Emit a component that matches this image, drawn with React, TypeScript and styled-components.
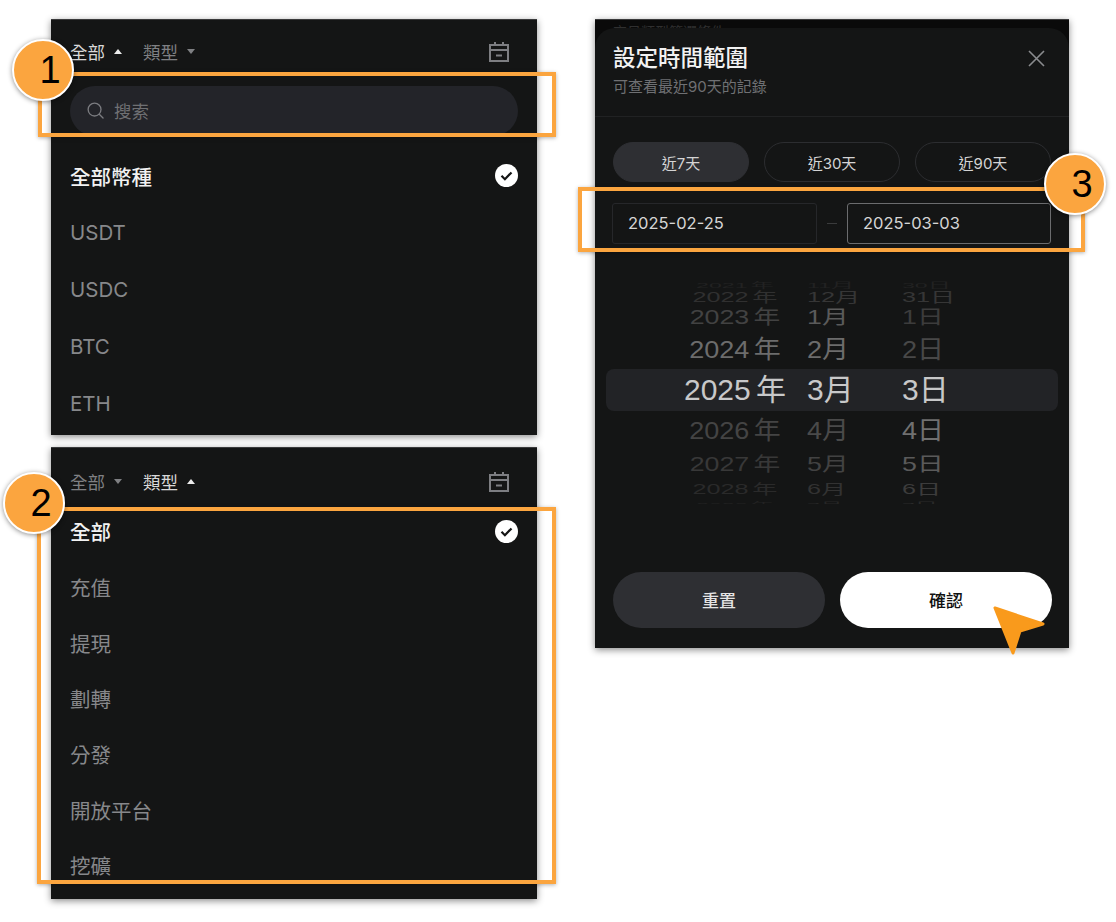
import React from 'react';
import styled, { createGlobalStyle } from 'styled-components';

const GlobalStyle = createGlobalStyle`
  html, body {
    margin: 0;
    padding: 0;
    background: #ffffff;
  }
  * {
    box-sizing: border-box;
  }
`;

const FONT = `Inter, "Noto Sans CJK TC", sans-serif`;
const ORANGE = '#fba53f';

const Page = styled.div`
  position: relative;
  width: 1116px;
  height: 922px;
  overflow: hidden;
  padding: 19px 0 0 51px;
  display: flex;
  align-items: flex-start;
  gap: 58px;
  font-family: ${FONT};
  color: #e8e8e8;
`;

const LeftColumn = styled.div`
  width: 486px;
  display: flex;
  flex-direction: column;
  gap: 12px;
`;

const Panel = styled.section<{ $height: number }>`
  height: ${(p) => p.$height}px;
  background: #141515;
  overflow: hidden;
  box-shadow: 0 2px 7px rgba(0, 0, 0, 0.45);
  border-top: 1px solid #3a3b3c;
`;

const FilterBar = styled.div<{ $height: number; $top: number }>`
  height: ${(p) => p.$height}px;
  padding: ${(p) => p.$top}px 27px 0 19px;
  display: flex;
  align-items: flex-start;
`;

const FilterTab = styled.div<{ $open?: boolean }>`
  height: 40px;
  padding-bottom: 2px;
  display: flex;
  align-items: center;
  gap: 9px;
  margin-right: 21px;
  font-size: 17.5px;
  color: ${(p) => (p.$open ? '#d8d8d8' : '#7f8083')};
`;

const Caret = styled.span<{ $open?: boolean }>`
  width: 0;
  height: 0;
  border-left: 4.5px solid transparent;
  border-right: 4.5px solid transparent;
  ${(p) =>
    p.$open
      ? 'border-bottom: 5px solid #ececec;'
      : 'border-top: 5px solid #7f8083;'}
`;

const CalendarButton = styled.div`
  margin-left: auto;
  height: 40px;
  display: flex;
  align-items: center;
`;

const SearchWrap = styled.div`
  padding: 2px 19px 11px 19px;
`;

const SearchBox = styled.div`
  height: 50px;
  padding: 0 0 2px 17px;
  border-radius: 25px;
  background: #232429;
  display: flex;
  align-items: center;
  gap: 10px;
  font-size: 17.5px;
  color: #6f7073;
`;

const OptionRow = styled.div<{ $height: number; $active?: boolean }>`
  height: ${(p) => p.$height}px;
  padding: 0 19px;
  display: flex;
  align-items: center;
  justify-content: space-between;
  font-size: 20.5px;
  font-weight: ${(p) => (p.$active ? 500 : 400)};
  color: ${(p) => (p.$active ? '#f2f2f2' : '#87888b')};
`;

const DateSheetFrame = styled.section`
  width: 474px;
  height: 629px;
  background: #0a0a0a;
  overflow: hidden;
  border-top: 1px solid #3a3b3c;
  box-shadow: 0 2px 7px rgba(0, 0, 0, 0.45);
`;

const BehindText = styled.div`
  height: 8px;
  padding: 5px 0 0 18px;
  overflow: hidden;
  font-size: 14px;
  line-height: 14px;
  color: #303030;
`;

const Sheet = styled.div`
  height: 620px;
  background: #141515;
  border-radius: 20px 20px 0 0;
`;

const SheetHeader = styled.header`
  height: 89px;
  padding: 17px 24px 0 18px;
  border-bottom: 1px solid #212223;
  display: flex;
  justify-content: space-between;
  align-items: flex-start;
`;

const SheetTitle = styled.h2`
  margin: 0;
  font-size: 22.5px;
  line-height: 26px;
  font-weight: 500;
  color: #f2f2f2;
`;

const SheetSubtitle = styled.p`
  margin: 6px 0 0;
  font-size: 15px;
  line-height: 20px;
  color: #6f7073;
`;

const CloseButton = styled.div`
  margin: 5px 0 0;
  height: 20px;
  display: flex;
`;

const PresetRow = styled.div`
  margin-top: 25px;
  padding: 0 18px;
  display: grid;
  grid-template-columns: repeat(3, 136px);
  gap: 15px;
`;

const PresetButton = styled.div<{ $active?: boolean }>`
  height: 40px;
  border-radius: 20px;
  border: 1px solid ${(p) => (p.$active ? '#2e2f33' : '#2c2d30')};
  background: ${(p) => (p.$active ? '#2e2f33' : 'transparent')};
  display: flex;
  align-items: center;
  justify-content: center;
  font-size: 15px;
  color: #d4d4d4;
`;

const DateRow = styled.div`
  margin-top: 21px;
  padding: 0 18px 0 17px;
  display: flex;
  align-items: center;
  justify-content: space-between;
`;

const DateField = styled.div<{ $focused?: boolean }>`
  width: ${(p) => (p.$focused ? 204 : 205)}px;
  height: 41px;
  padding: 0 0 2px 15px;
  border: ${(p) => (p.$focused ? '1.5px solid #6b6c6e' : '1px solid #26272a')};
  border-radius: 3px;
  display: flex;
  align-items: center;
  font-size: 16.5px;
  color: #d6d6d6;
`;

const DateDash = styled.span`
  width: 10px;
  height: 1px;
  background: #3a3b3c;
`;

const Wheel = styled.div`
  margin: 35px 11px 0;
  height: 225px;
  overflow: hidden;
  font-family: "Liberation Sans", "Noto Sans CJK TC", sans-serif;
`;

const WheelInner = styled.div`
  margin-top: -4px;
`;

const WheelRow = styled.div<{ $height: number; $selected?: boolean }>`
  height: ${(p) => p.$height}px;
  padding-left: 75px;
  display: grid;
  grid-template-columns: 108px 77px 1fr;
  column-gap: 18px;
  align-items: center;
  border-radius: ${(p) => (p.$selected ? '8px' : '0')};
  background: ${(p) => (p.$selected ? '#222326' : 'transparent')};
`;

const WheelCell = styled.span<{
  $size: number;
  $squash: number;
  $stretch: number;
  $tone: string;
  $center?: boolean;
}>`
  display: block;
  white-space: nowrap;
  word-spacing: -3px;
  line-height: 1;
  font-size: ${(p) => p.$size}px;
  color: ${(p) => p.$tone};
  text-align: ${(p) => (p.$center ? 'center' : 'left')};
  transform-origin: ${(p) => (p.$center ? 'center' : 'left center')};
  transform: scale(${(p) => p.$stretch}, ${(p) => p.$squash});
`;

const SheetFooter = styled.div`
  margin-top: 68px;
  padding: 0 18px;
  display: grid;
  grid-template-columns: 212px 212px;
  gap: 15px;
`;

const FooterButton = styled.div<{ $primary?: boolean }>`
  height: 56px;
  padding-bottom: 2px;
  border-radius: 28px;
  background: ${(p) => (p.$primary ? '#ffffff' : '#2e2f33')};
  color: ${(p) => (p.$primary ? '#111111' : '#e4e4e4')};
  display: flex;
  align-items: center;
  justify-content: center;
  font-size: 17px;
  font-weight: 500;
`;

const HighlightBox = styled.div<{ $x: number; $y: number; $w: number; $h: number }>`
  position: absolute;
  left: ${(p) => p.$x}px;
  top: ${(p) => p.$y}px;
  width: ${(p) => p.$w}px;
  height: ${(p) => p.$h}px;
  border: 4px solid ${ORANGE};
  box-shadow: 0 1px 4px rgba(0, 0, 0, 0.3);
`;

const Callout = styled.div<{ $x: number; $y: number }>`
  position: absolute;
  left: ${(p) => p.$x}px;
  top: ${(p) => p.$y}px;
  width: 62px;
  height: 62px;
  border-radius: 50%;
  background: ${ORANGE};
  border: 2px solid #ffffff;
  box-shadow: 0 1px 5px rgba(0, 0, 0, 0.45);
  display: flex;
  align-items: center;
  justify-content: center;
  padding-left: 14px;
  font-family: "Liberation Sans", sans-serif;
  font-size: 38px;
  color: #000000;
`;

const Pointer = styled.svg`
  position: absolute;
  left: 990px;
  top: 602px;
`;

const CalendarIcon = () => (
  <svg width="22" height="22" viewBox="0 0 22 22" fill="none" stroke="#7d7e82" strokeWidth="2">
    <rect x="2" y="4" width="18" height="16" />
    <path d="M2 9h18M7 1v4M15 1v4M8 14.5h6" />
  </svg>
);

const SearchIcon = () => (
  <svg width="17" height="17" viewBox="0 0 18 18" fill="none" stroke="#7b7c80" strokeWidth="1.4">
    <circle cx="8" cy="8" r="6.8" />
    <path d="M13 13l4 4" strokeLinecap="round" />
  </svg>
);

const CheckBadge = () => (
  <svg width="23" height="23" viewBox="0 0 23 23">
    <circle cx="11.5" cy="11.5" r="11.5" fill="#ffffff" />
    <path d="M6.5 11.8l3.4 3.4 6.6-6.8" fill="none" stroke="#141515" strokeWidth="2.2" />
  </svg>
);

const CloseIcon = () => (
  <svg width="17" height="17" viewBox="0 0 17 17" stroke="#8a8b8e" strokeWidth="1.6">
    <path d="M1 1l15 15M16 1L1 16" />
  </svg>
);

const COIN_OPTIONS = ['USDT', 'USDC', 'BTC', 'ETH'];
const TYPE_OPTIONS = ['充值', '提現', '劃轉', '分發', '開放平台', '挖礦'];
const PRESETS = ['近7天', '近30天', '近90天'];

const WHEEL_ROWS = [
  { h: 10, size: 22, squash: 0.35, stretch: 1.05, cells: [['2021 年', '#222222'], ['11月', '#222222'], ['30日', '#222222']] },
  { h: 18, size: 24, squash: 0.58, stretch: 1.05, cells: [['2022 年', '#303030'], ['12月', '#363636'], ['31日', '#363636']] },
  { h: 28, size: 26, squash: 0.76, stretch: 1.03, cells: [['2023 年', '#424242'], ['1月', '#5a5a5a'], ['1日', '#3c3c3c']] },
  { h: 38, size: 27, squash: 0.92, stretch: 1, cells: [['2024 年', '#6c6c6c'], ['2月', '#6c6c6c'], ['2日', '#484848']] },
  { h: 42, size: 30, squash: 1, stretch: 1, selected: true, cells: [['2025 年', '#c8c8c9'], ['3月', '#c8c8c9'], ['3日', '#c8c8c9']] },
  { h: 40, size: 27, squash: 0.92, stretch: 1, cells: [['2026 年', '#444444'], ['4月', '#4a4a4a'], ['4日', '#707070']] },
  { h: 26, size: 26, squash: 0.76, stretch: 1.03, cells: [['2027 年', '#383838'], ['5月', '#424242'], ['5日', '#5a5a5a']] },
  { h: 18, size: 24, squash: 0.58, stretch: 1.05, cells: [['2028 年', '#2a2a2a'], ['6月', '#323232'], ['6日', '#3c3c3c']] },
  { h: 10, size: 22, squash: 0.35, stretch: 1.05, cells: [['2029 年', '#222222'], ['7月', '#262626'], ['7日', '#2a2a2a']] },
];

export default function App() {
  return (
    <Page>
      <GlobalStyle />
      <LeftColumn>
        <Panel $height={416}>
          <FilterBar $height={64} $top={12}>
            <FilterTab $open>全部<Caret $open /></FilterTab>
            <FilterTab>類型<Caret /></FilterTab>
            <CalendarButton><CalendarIcon /></CalendarButton>
          </FilterBar>
          <SearchWrap>
            <SearchBox><SearchIcon />搜索</SearchBox>
          </SearchWrap>
          <OptionRow $height={57} $active>全部幣種<CheckBadge /></OptionRow>
          {COIN_OPTIONS.map((coin) => (
            <OptionRow key={coin} $height={57}>{coin}</OptionRow>
          ))}
        </Panel>

        <Panel $height={452}>
          <FilterBar $height={55} $top={14}>
            <FilterTab>全部<Caret /></FilterTab>
            <FilterTab $open>類型<Caret $open /></FilterTab>
            <CalendarButton><CalendarIcon /></CalendarButton>
          </FilterBar>
          <OptionRow $height={56} $active>全部<CheckBadge /></OptionRow>
          {TYPE_OPTIONS.map((label) => (
            <OptionRow key={label} $height={55.7}>{label}</OptionRow>
          ))}
        </Panel>
      </LeftColumn>

      <DateSheetFrame>
        <BehindText>交易類型篩選條件</BehindText>
        <Sheet>
          <SheetHeader>
            <div>
              <SheetTitle>設定時間範圍</SheetTitle>
              <SheetSubtitle>可查看最近90天的記錄</SheetSubtitle>
            </div>
            <CloseButton><CloseIcon /></CloseButton>
          </SheetHeader>

          <PresetRow>
            {PRESETS.map((label, index) => (
              <PresetButton key={label} $active={index === 0}>{label}</PresetButton>
            ))}
          </PresetRow>

          <DateRow>
            <DateField>2025-02-25</DateField>
            <DateDash />
            <DateField $focused>2025-03-03</DateField>
          </DateRow>

          <Wheel>
            <WheelInner>
              {WHEEL_ROWS.map((row) => (
                <WheelRow key={row.cells[0][0]} $height={row.h} $selected={row.selected}>
                  {row.cells.map(([text, tone], index) => (
                    <WheelCell
                      key={text}
                      $size={row.size}
                      $squash={row.squash}
                      $stretch={row.stretch}
                      $tone={tone}
                      $center={index === 0}
                    >
                      {text}
                    </WheelCell>
                  ))}
                </WheelRow>
              ))}
            </WheelInner>
          </Wheel>

          <SheetFooter>
            <FooterButton>重置</FooterButton>
            <FooterButton $primary>確認</FooterButton>
          </SheetFooter>
        </Sheet>
      </DateSheetFrame>

      <HighlightBox $x={38} $y={72} $w={518} $h={65} />
      <HighlightBox $x={37} $y={507} $w={519} $h={377} />
      <HighlightBox $x={578} $y={187} $w={507} $h={65} />

      <Callout $x={12} $y={39}>1</Callout>
      <Callout $x={3} $y={472}>2</Callout>
      <Callout $x={1044} $y={153}>3</Callout>

      <Pointer width="60" height="60" viewBox="0 0 60 60">
        <path
          d="M5 6 L53 22 L30 29 L23 51 Z"
          fill="#f99a1c"
          stroke="#f99a1c"
          strokeWidth="3"
          strokeLinejoin="round"
        />
      </Pointer>
    </Page>
  );
}
